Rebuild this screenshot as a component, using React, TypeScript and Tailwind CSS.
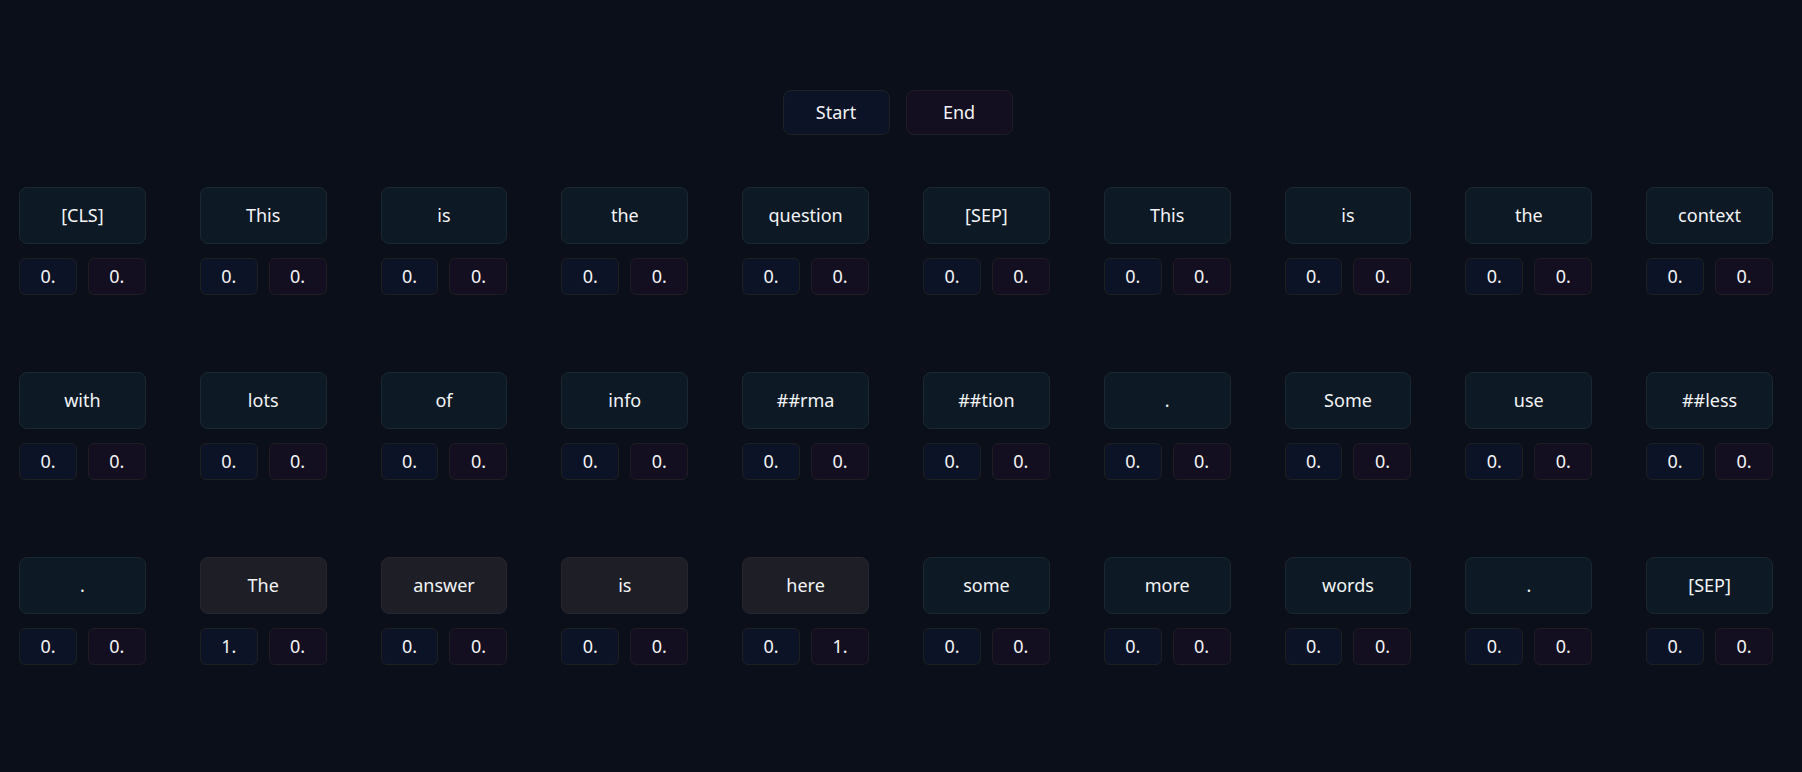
const tokens: { text: string; start: string; end: string; answer?: boolean }[] = [
  { text: "[CLS]", start: "0.", end: "0." },
  { text: "This", start: "0.", end: "0." },
  { text: "is", start: "0.", end: "0." },
  { text: "the", start: "0.", end: "0." },
  { text: "question", start: "0.", end: "0." },
  { text: "[SEP]", start: "0.", end: "0." },
  { text: "This", start: "0.", end: "0." },
  { text: "is", start: "0.", end: "0." },
  { text: "the", start: "0.", end: "0." },
  { text: "context", start: "0.", end: "0." },
  { text: "with", start: "0.", end: "0." },
  { text: "lots", start: "0.", end: "0." },
  { text: "of", start: "0.", end: "0." },
  { text: "info", start: "0.", end: "0." },
  { text: "##rma", start: "0.", end: "0." },
  { text: "##tion", start: "0.", end: "0." },
  { text: ".", start: "0.", end: "0." },
  { text: "Some", start: "0.", end: "0." },
  { text: "use", start: "0.", end: "0." },
  { text: "##less", start: "0.", end: "0." },
  { text: ".", start: "0.", end: "0." },
  { text: "The", start: "1.", end: "0.", answer: true },
  { text: "answer", start: "0.", end: "0.", answer: true },
  { text: "is", start: "0.", end: "0.", answer: true },
  { text: "here", start: "0.", end: "1.", answer: true },
  { text: "some", start: "0.", end: "0." },
  { text: "more", start: "0.", end: "0." },
  { text: "words", start: "0.", end: "0." },
  { text: ".", start: "0.", end: "0." },
  { text: "[SEP]", start: "0.", end: "0." },
];

export default function App() {
  return (
    <div
      className="w-full h-[772px] bg-[#0b0f19] text-[#f3f4f6] pt-[90px]"
      style={{ fontFamily: '"Noto Sans", "Open Sans", sans-serif' }}
    >
      <div className="ml-[19px] w-[1754px]">
        <div className="flex justify-center gap-4 pl-[3px]">
          <div className="w-[107px] h-[45px] flex items-center justify-center rounded-lg border border-[#1f2126] bg-[#0c1326] text-[18px]">
            Start
          </div>
          <div className="w-[107px] h-[45px] flex items-center justify-center rounded-lg border border-[#1f1d24] bg-[#140f20] text-[18px]">
            End
          </div>
        </div>

        <div className="mt-[52px] grid grid-cols-10 gap-x-[54px] gap-y-[77px]">
          {tokens.map((t, i) => (
            <div key={i} className="flex flex-col gap-[14px]">
              <div
                className={`h-[57px] flex items-center justify-center rounded-lg border text-[18px] ${
                  t.answer ? "bg-[#1e1f26] border-[#25272d]" : "bg-[#0d1a25] border-[#1c2830]"
                }`}
              >
                {t.text}
              </div>
              <div className="grid grid-cols-2 gap-[11px]">
                <div className="h-[37px] flex items-center justify-center rounded-md border border-[#1e1f20] bg-[#0c1326] text-[18px]">
                  {t.start}
                </div>
                <div className="h-[37px] flex items-center justify-center rounded-md border border-[#1f1d22] bg-[#140f20] text-[18px]">
                  {t.end}
                </div>
              </div>
            </div>
          ))}
        </div>
      </div>
    </div>
  );
}
